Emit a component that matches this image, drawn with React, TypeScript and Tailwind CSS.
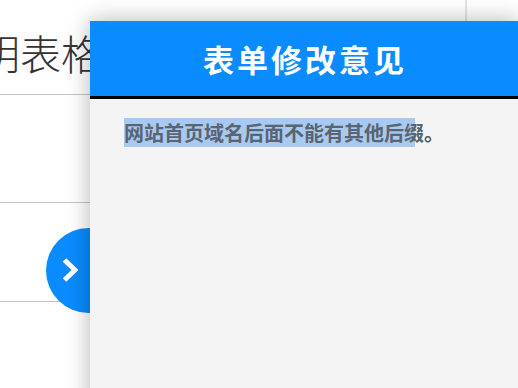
import React from "react";

export default function App() {
  return (
    <div className="relative w-[518px] h-[388px] overflow-hidden bg-white font-['Noto_Sans_CJK_SC','Noto_Sans',sans-serif]">
      {/* background page */}
      <div className="flex flex-col w-full">
        <div className="flex h-[95px] border-b border-[#c4c4c4]">
          <div className="flex-1 overflow-hidden">
            <div className="-ml-[21px] mt-[32px] text-[41px] leading-[41px] font-light text-[#333] whitespace-nowrap">
              明表格
            </div>
          </div>
          <div className="w-[53px] border-l-2 border-[#e4e4e4]" />
        </div>
        <div className="h-[108px] border-b border-[#c4c4c4]" />
        <div className="h-[99px] border-b border-[#c4c4c4]" />
      </div>

      {/* toggle button */}
      <div className="absolute left-[46px] top-[228px] w-[85px] h-[85px] rounded-full bg-[#0a8bff]">
        <svg
          className="absolute left-[16px] top-[29px]"
          width="16"
          height="26"
          viewBox="0 0 16 26"
        >
          <polyline
            points="2.5,3 13,13 2.5,23"
            fill="none"
            stroke="white"
            strokeWidth="5"
          />
        </svg>
      </div>

      {/* side panel */}
      <div className="absolute left-[90px] top-[21px] w-[430px] h-[420px] bg-[#f4f4f4] shadow-[0_0_22px_rgba(0,0,0,0.3)] flex flex-col">
        <div className="h-[78px] bg-[#0a8bff] border-b-[3px] border-black flex items-center justify-center">
          <span className="text-white text-[31px] font-bold tracking-[3px] leading-none">
            表单修改意见
          </span>
        </div>
        <div className="pl-[34px] pt-[25px]">
          <p className="text-[20px] leading-[18px] font-bold text-[#555] whitespace-nowrap">
            <span className="bg-[#a9caf0] text-[#5a6472]">网站首页域名后面不能有其他后</span>
            <span className="bg-[linear-gradient(to_right,#a9caf0_55%,transparent_55%)] text-[#5a6472]">缀</span>
            <span>。</span>
          </p>
        </div>
      </div>
    </div>
  );
}
